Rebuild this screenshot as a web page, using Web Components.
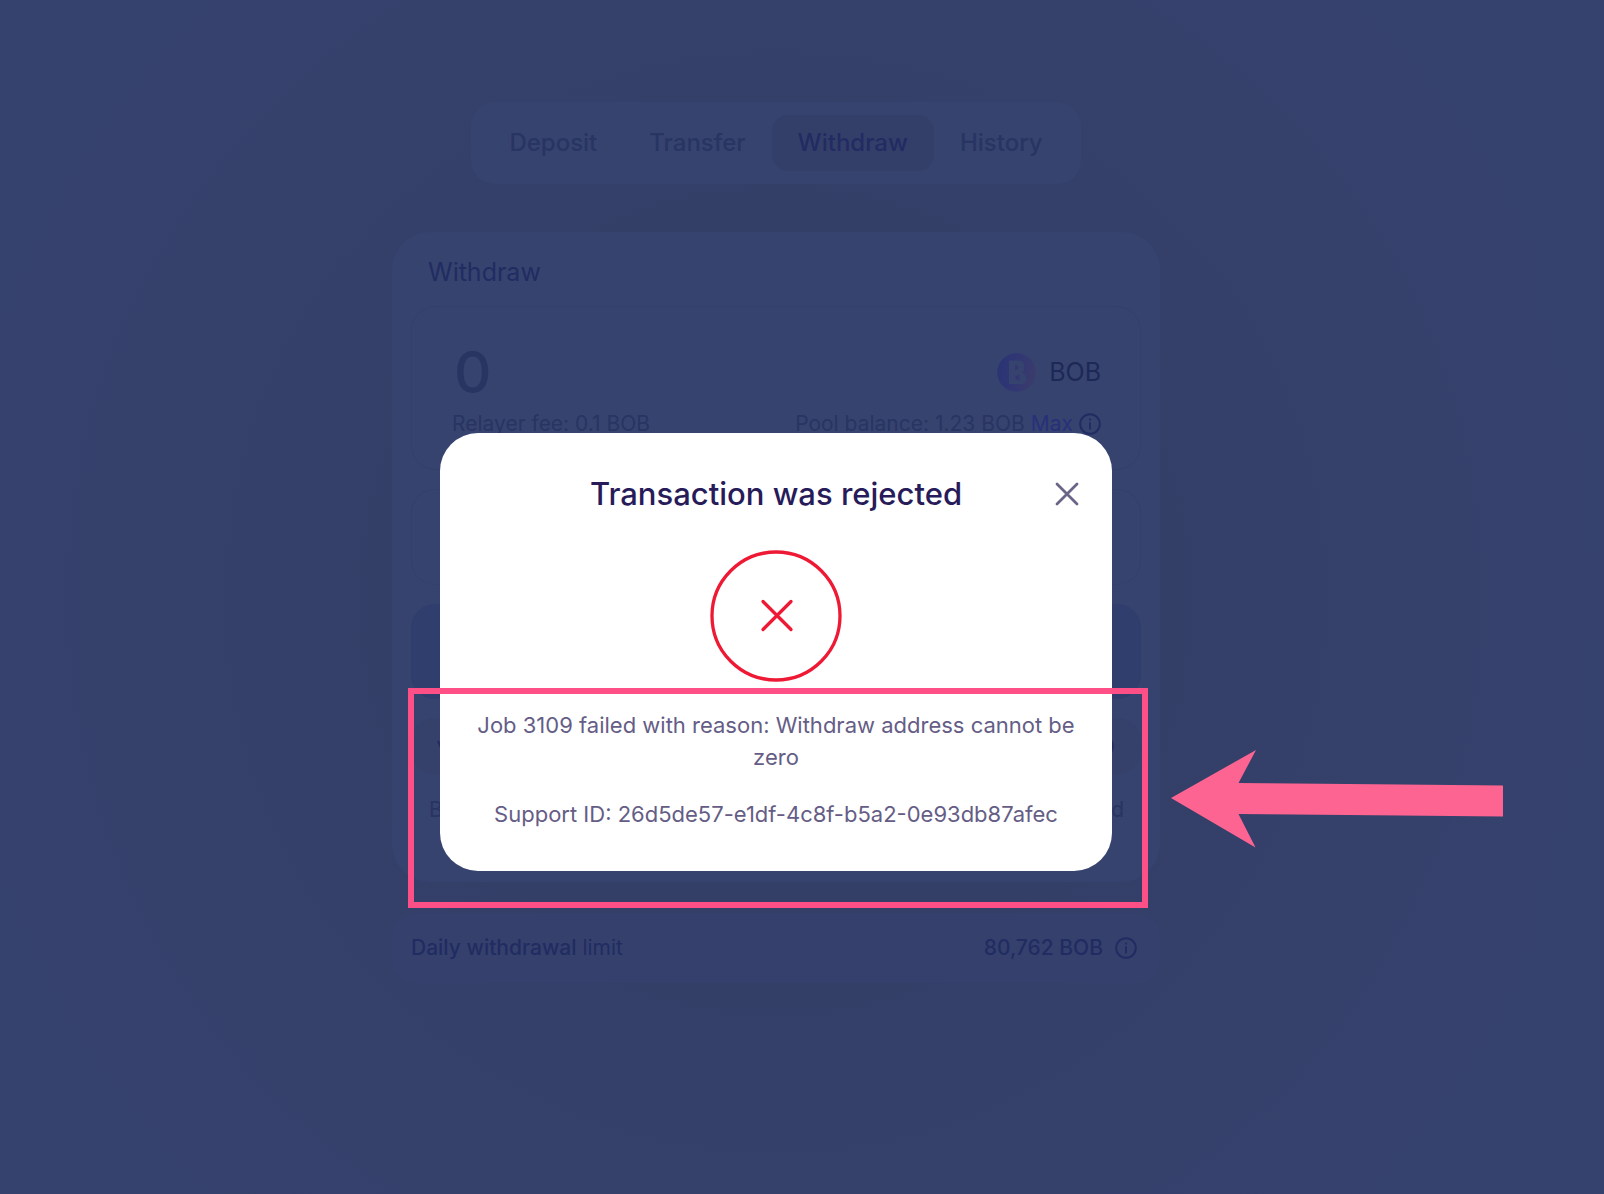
<!DOCTYPE html>
<html lang="en">
<head>
<meta charset="utf-8">
<title>Withdraw</title>
<style>
  html, body { margin: 0; min-height: 100%; }
  body {
    --bg: #35416b;
    --panel: #36436e;
    --ink: #212c62;
    --muted: #283462;
    --pink: #fe4f87;
    font-family: Inter, "Open Sans", sans-serif;
    background: var(--bg);
    color: var(--ink);
  }
</style>
</head>
<body>
<zk-page>
  <zk-tabs slot="nav">
    <zk-tab>Deposit</zk-tab>
    <zk-tab>Transfer</zk-tab>
    <zk-tab active>Withdraw</zk-tab>
    <zk-tab>History</zk-tab>
  </zk-tabs>
  <zk-withdraw-card></zk-withdraw-card>
  <zk-limit>
    <span slot="value">80,762 BOB</span>
  </zk-limit>
</zk-page>
<zk-modal heading="Transaction was rejected">
  <p>Job 3109 failed with reason: Withdraw address cannot be zero</p>
  <p>Support ID: 26d5de57-e1df-4c8f-b5a2-0e93db87afec</p>
</zk-modal>
<zk-annotation></zk-annotation>

<script>
  function define(name, html, setup) {
    const template = document.createElement('template');
    template.innerHTML = html;
    customElements.define(name, class extends HTMLElement {
      constructor() {
        super();
        this.attachShadow({ mode: 'open' }).append(template.content.cloneNode(true));
      }
      connectedCallback() { if (setup) setup(this, this.shadowRoot); }
    });
  }

  define('zk-page', `
    <style>
      :host {
        display: flex; flex-direction: column; align-items: center;
        box-sizing: border-box; min-height: 100vh;
        padding: 102px 52px 40px 0;
        background:
          radial-gradient(circle at 776px 600px, #343f68 0, #343f68 380px, #35406a 520px, #35416b 640px, #35426d 900px);
      }
      main { display: flex; flex-direction: column; gap: 31px; width: 100%; max-width: 768px; margin-top: 48px; }
    </style>
    <slot name="nav"></slot>
    <main><slot></slot></main>`);

  define('zk-tabs', `
    <style>
      :host { display: block; }
      nav { display: flex; padding: 13px 12px; border-radius: 24px; background: var(--panel); }
    </style>
    <nav><slot></slot></nav>`);

  define('zk-tab', `
    <style>
      :host { display: block; }
      button {
        border: 0; background: none; padding: 0 26px; border-radius: 16px;
        font: 500 24px/56px Inter, sans-serif; color: var(--muted); cursor: pointer;
      }
      :host([active]) button { background: #343f69; color: var(--ink); }
    </style>
    <button type="button"><slot></slot></button>`);

  define('zk-info', `
    <style>:host { display: block; width: 22px; height: 22px; } svg { display: block; }</style>
    <svg width="22" height="22" viewBox="0 0 22 22" fill="none" stroke="currentColor" stroke-width="2" aria-hidden="true">
      <circle cx="11" cy="11" r="9.8"/><path d="M11 9.2v7.3" stroke-width="1.8"/><path d="M11 5.4v2" stroke-width="1.9"/>
    </svg>`);

  define('zk-withdraw-card', `
    <style>
      :host { display: block; }
      section {
        display: flex; flex-direction: column; gap: 19px;
        padding: 24px 19px 56px; border-radius: 38px; background: var(--panel);
      }
      h1 { margin: 0 17px -1px; font-weight: 400; font-size: 25px; line-height: 32px; }
      .box { box-sizing: border-box; border: 1px solid #334069; border-radius: 24px; }
      .amount { padding: 35px 39px 29px 40px; display: flex; flex-direction: column; gap: 6px; }
      .row { display: flex; align-items: center; justify-content: space-between; }
      .main { height: 60px; }
      .small { font-size: 21px; line-height: 32px; color: var(--muted); }
      input {
        width: 240px; padding: 0 0 0 2px; border: 0; outline: 0; background: none;
        font: 500 58px/60px Inter, sans-serif; color: var(--muted);
      }
      .token { display: flex; align-items: center; gap: 13px; font-size: 25px; color: #1d2856; }
      .token svg { display: block; }
      .pool { display: flex; align-items: center; gap: 6px; }
      .pool button { border: 0; padding: 0; background: none; font: inherit; color: #28307a; }
      zk-info { color: var(--ink); }
      .empty { height: 96px; }
      .submit { height: 95px; border: 0; border-radius: 24px; background: #303e6e; }
      .note { height: 56px; border-radius: 24px; background: #35416b; padding: 0 27px 0 21px; color: var(--ink); }
      .more { margin: 1px 17px 0 18px; }
    </style>
    <section>
      <h1>Withdraw</h1>
      <div class="box amount">
        <div class="row main">
          <input aria-label="Amount" value="0">
          <span class="token">
            <svg width="39" height="39" viewBox="0 0 39 39" aria-hidden="true">
              <defs><linearGradient id="g" x1="0" y1=".4" x2="1" y2=".6">
                <stop offset="0" stop-color="#2a3474"/><stop offset=".5" stop-color="#323774"/><stop offset="1" stop-color="#3b3c6b"/>
              </linearGradient></defs>
              <circle cx="19.5" cy="19.5" r="19.3" fill="url(#g)"/>
              <path fill="#36436e" fill-rule="evenodd" d="M12 7.500H23Q27 8.500 27 13V15.500Q27 18.500 25 20Q29 21 29 25V26.500Q29 31 24.500 31H12ZM18 11.500V17.500Q21.500 16 21.500 14.500Q21.500 13 18 11.500ZM22.500 21.500Q18 23 18 24.700Q18 26.500 22.500 28Z"/>
            </svg>
            BOB
          </span>
        </div>
        <div class="row small">
          <span>Relayer fee: 0.1 BOB</span>
          <span class="pool"><span>Pool balance: 1.23 BOB</span> <button type="button">Max</button> <zk-info></zk-info></span>
        </div>
      </div>
      <div class="box empty"></div>
      <button class="submit" type="button" aria-label="Submit"></button>
      <div class="row note">
        <svg width="12" height="12" viewBox="0 0 12 12" aria-hidden="true"><path d="M6 1l4 9 2-4" fill="none" stroke="currentColor" stroke-width="2"/></svg>
        <zk-info></zk-info>
      </div>
      <div class="row small more"><span>B</span><span>d</span></div>
    </section>`);

  define('zk-limit', `
    <style>
      :host {
        display: flex; align-items: center; justify-content: space-between;
        padding: 19px 23px 19px 19px; border-radius: 24px; background: #35416c;
        font-size: 21px; line-height: 32px; color: var(--ink);
      }
      b, .value { font-weight: 500; }
      .value { display: flex; align-items: center; gap: 12px; }
    </style>
    <span><b>Daily withdrawal</b> limit</span>
    <span class="value"><slot name="value"></slot><zk-info></zk-info></span>`);

  define('zk-modal', `
    <style>
      :host {
        position: fixed; inset: 0; display: flex; align-items: center; justify-content: center;
        padding: 110px 52px 0 0;
      }
      [role=dialog] {
        box-sizing: border-box; width: 100%; max-width: 672px; padding: 40px 33px 41px;
        border-radius: 38px; background: #fff; color: #655d86; text-align: center;
      }
      header { display: grid; grid-template-columns: 24px 1fr 24px; align-items: center; height: 42px; }
      h2 { grid-column: 2; margin: 0; font-weight: 500; font-size: 31px; line-height: 42px; color: #271b59; white-space: nowrap; }
      header button { border: 0; padding: 0; background: none; color: #6b6489; height: 24px; }
      svg { display: block; }
      .status { margin: 35px auto 27px; }
      .text { display: flex; flex-direction: column; gap: 25px; }
      ::slotted(p) { margin: 0 !important; font-size: 22px; line-height: 32px; }
    </style>
    <div role="dialog" aria-labelledby="t">
      <header>
        <h2 id="t"></h2>
        <button type="button" aria-label="Close">
          <svg width="24" height="24" viewBox="0 0 24 24" fill="none" stroke="currentColor" stroke-width="2.800" stroke-linecap="round"><path d="M2 2l20 20M22 2L2 22"/></svg>
        </button>
      </header>
      <svg class="status" width="132" height="132" viewBox="0 0 132 132" fill="none" stroke="#ee1a35" stroke-width="3.300" stroke-linecap="round" aria-hidden="true">
        <circle cx="66" cy="66" r="64"/><path d="M53 51.500l28 28M81 51.500L53 79.500"/>
      </svg>
      <div class="text"><slot></slot></div>
    </div>`, (host, root) => { root.querySelector('h2').textContent = host.getAttribute('heading'); });

  define('zk-annotation', `
    <style>
      :host { position: fixed; inset: 0; pointer-events: none; }
      .frame { position: absolute; left: 408px; top: 688px; width: 740px; height: 220px; box-sizing: border-box; border: 6px solid var(--pink); }
      svg { position: absolute; left: 1171px; top: 750px; }
    </style>
    <div class="frame"></div>
    <svg width="333" height="98" viewBox="0 0 333 98" aria-hidden="true"><path fill="#fe6491" d="M0 48L85 0 67.500 33 332 35.500V66.500L67.500 64 84.500 97.500z"/></svg>`);
</script>
</body>
</html>
